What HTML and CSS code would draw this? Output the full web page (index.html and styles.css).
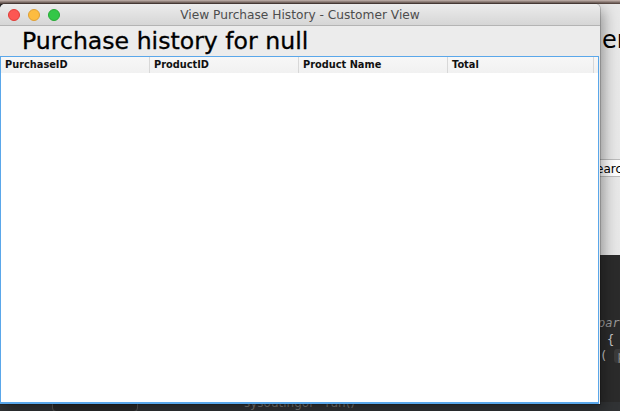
FILE: index.html
```html
<!DOCTYPE html>
<html>
<head>
<meta charset="utf-8">
<link rel="stylesheet" href="styles.css">
</head>
<body>
<div class="desktop">
  <div class="topstrip"></div>
  <div class="backwin">
    <div class="bw-head">en</div>
    <div class="bw-field">earc</div>
  </div>
  <div class="editor">
    <div class="code c1">par</div>
    <div class="code c2">{</div>
    <div class="code c3">( <span class="chip">p</span></div>
    <div class="statusbar"><span class="sb-box"></span><span class="sb-text">sysoutingor · run()</span></div>
  </div>
  <div class="window">
    <div class="titlebar">
      <div class="lights">
        <span class="light red"></span>
        <span class="light yellow"></span>
        <span class="light green"></span>
      </div>
      <div class="title">View Purchase History - Customer View</div>
    </div>
    <div class="content">
      <h1 class="heading">Purchase history for null</h1>
      <div class="table">
        <div class="thead">
          <div class="th">PurchaseID</div>
          <div class="th">ProductID</div>
          <div class="th">Product Name</div>
          <div class="th">Total</div>
        </div>
        <div class="tbody"></div>
      </div>
    </div>
  </div>
</div>
</body>
</html>
```

FILE: styles.css
```css
html, body {
  margin: 0;
  padding: 0;
  width: 620px;
  height: 411px;
  overflow: hidden;
}
body {
  font-family: "DejaVu Sans", "Noto Sans", sans-serif;
}
.desktop {
  position: relative;
  width: 620px;
  height: 411px;
  background: #2b2b2b;
  overflow: hidden;
}
.topstrip {
  position: absolute;
  left: 0;
  top: 0;
  width: 620px;
  height: 4px;
  background: linear-gradient(#c9b8b2, #4a3a34);
}
.backwin {
  position: absolute;
  left: 560px;
  top: 4px;
  width: 80px;
  height: 251px;
  background: linear-gradient(to right, #d8d8d8, #e6e6e6 30%, #e8e8e8);
}
.bw-head {
  position: absolute;
  left: 42px;
  top: 22px;
  font-size: 24px;
  color: #000;
}
.bw-field {
  position: absolute;
  left: 32px;
  top: 155px;
  width: 60px;
  height: 18px;
  background: #fff;
  border-top: 1px solid #bbb;
  border-bottom: 1px solid #bbb;
  font-size: 12px;
  line-height: 18px;
  padding-left: 4px;
  box-sizing: border-box;
  color: #000;
  white-space: nowrap;
  overflow: hidden;
}
.editor {
  position: absolute;
  left: 0;
  top: 255px;
  width: 620px;
  height: 156px;
  background: #2b2b2b;
}
.code {
  position: absolute;
  font-family: "DejaVu Sans Mono", monospace;
  font-size: 12px;
  color: #a9b7c6;
  white-space: nowrap;
}
.c1 { left: 598px; top: 61px; font-style: italic; color: #9a9a9a; }
.c2 { left: 607px; top: 78px; color: #c8c8c8; }
.c3 { left: 600px; top: 94px; color: #c8c8c8; }
.chip {
  display: inline-block;
  background: #3b3b3b;
  color: #8a8a8a;
  padding: 0 3px;
  border-radius: 3px;
}
.statusbar {
  position: absolute;
  left: 0;
  top: 147px;
  width: 620px;
  height: 9px;
  background: #313335;
}
.sb-box {
  position: absolute;
  left: 52px;
  top: -4px;
  width: 84px;
  height: 12px;
  border: 1px solid #555;
  border-radius: 4px;
  background: #2a2a2a;
}
.sb-text {
  position: absolute;
  left: 244px;
  top: -6px;
  font-size: 12px;
  color: #777;
  white-space: nowrap;
}
.window {
  position: absolute;
  left: 0;
  top: 4px;
  width: 600px;
  height: 400px;
  background: #ececec;
  border-radius: 5px 5px 0 0;
  box-shadow: 0 0 0 1px rgba(0,0,0,0.18), 4px 6px 14px rgba(0,0,0,0.35);
  display: flex;
  flex-direction: column;
  overflow: hidden;
}
.titlebar {
  position: relative;
  height: 21px;
  flex: none;
  background: linear-gradient(#ececec, #d6d6d6);
  border-bottom: 1px solid #b4b4b4;
  display: flex;
  align-items: center;
}
.lights {
  display: flex;
  gap: 8px;
  padding-left: 8px;
}
.light {
  width: 12px;
  height: 12px;
  border-radius: 50%;
  box-sizing: border-box;
}
.red { background: #fc5753; border: 1px solid #df3d37; }
.yellow { background: #fdbc40; border: 1px solid #de9f34; }
.green { background: #33c748; border: 1px solid #27aa35; }
.title {
  position: absolute;
  left: 0;
  right: 0;
  top: 0;
  text-align: center;
  font-size: 12.2px;
  line-height: 22px;
  color: #4d4d4d;
}
.content {
  flex: 1;
  display: flex;
  flex-direction: column;
}
.heading {
  margin: 0;
  padding-left: 22px;
  font-weight: normal;
  font-size: 23.6px;
  line-height: 30px;
  height: 30px;
  color: #000;
  -webkit-text-stroke: 0.3px #000;
}
.table {
  flex: 1;
  background: #fff;
  border: 1px solid #5aa7ea;
  border-bottom-width: 2px;
  margin-right: 1px;
  display: flex;
  flex-direction: column;
}
.thead {
  display: grid;
  grid-template-columns: 149px 149px 149px 1fr;
  height: 16px;
  background: linear-gradient(#f7f7f7, #f1f1f1);
}
.th {
  font-size: 9.8px;
  font-weight: bold;
  line-height: 16px;
  padding-left: 4px;
  border-right: 1px solid #d8d8d8;
  color: #111;
  white-space: nowrap;
  overflow: hidden;
}
.th:last-child { margin-right: 4px; }
.tbody { flex: 1; }
```
